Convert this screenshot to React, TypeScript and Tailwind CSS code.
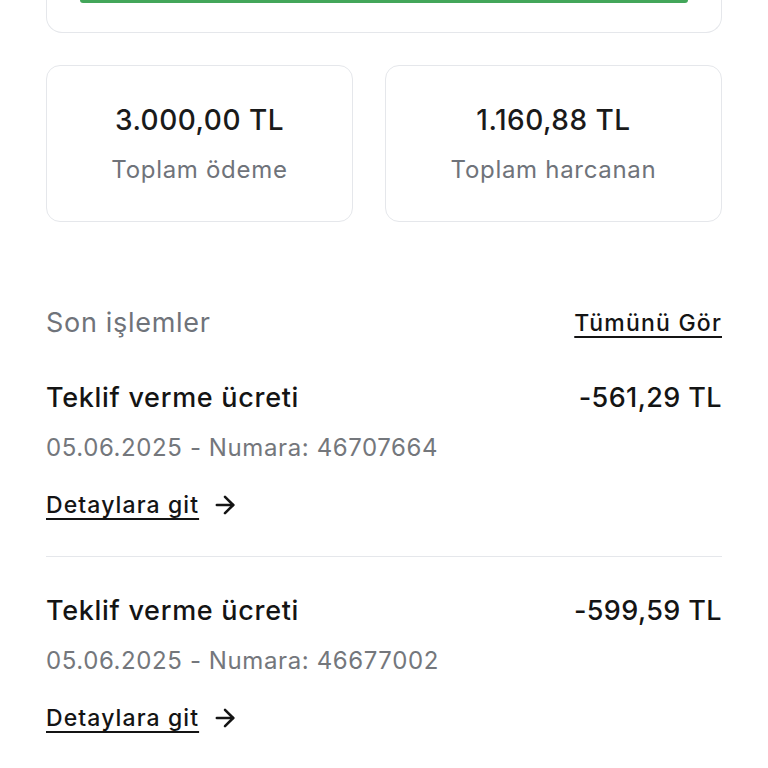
import { ArrowRight } from "lucide-react";

type Tx = { title: string; amount: string; date: string; no: string };

const items: Tx[] = [
  { title: "Teklif verme ücreti", amount: "-561,29 TL", date: "05.06.2025", no: "46707664" },
  { title: "Teklif verme ücreti", amount: "-599,59 TL", date: "05.06.2025", no: "46677002" },
];

function StatCard({ value, label, className }: { value: string; label: string; className: string }) {
  return (
    <div className={`flex h-[157px] flex-col items-center justify-center rounded-[14px] border border-gray-200 bg-white ${className}`}>
      <div className="text-[28px] font-medium leading-none tracking-[0.5px] text-[#1a1a1a]">{value}</div>
      <div className="mt-[24px] text-[24px] leading-none tracking-[0.7px] text-[#6f737a]">{label}</div>
    </div>
  );
}

export default function App() {
  return (
    <div className="h-[768px] w-[768px] overflow-hidden bg-white font-['Inter',sans-serif] text-[#141414]">
      <div className="px-[46px]">
        {/* üst kart (kesik) */}
        <div className="h-[33px] rounded-b-[16px] border border-t-0 border-gray-200 bg-white px-[33px]">
          <div className="h-[3px] rounded-b-full bg-[#43a65a]" />
        </div>

        {/* toplamlar */}
        <div className="mt-[32px] flex gap-[32px]">
          <StatCard value="3.000,00 TL" label="Toplam ödeme" className="w-[307px]" />
          <StatCard value="1.160,88 TL" label="Toplam harcanan" className="flex-1" />
        </div>

        {/* son işlemler */}
        <div className="mt-[81px] flex items-center justify-between">
          <span className="text-[27px] tracking-[0.7px] text-[#6f737a]">Son işlemler</span>
          <a className="text-[23px] font-medium tracking-[1.2px] underline underline-offset-[5px] decoration-[1.5px]">Tümünü Gör</a>
        </div>

        <div className="mt-[34px]">
          {items.map((t, i) => (
            <div key={t.no} className={i > 0 ? "border-t border-gray-200 pt-[34px]" : "pt-0"}>
              <div className="flex items-center justify-between">
                <span className="text-[27px] font-medium tracking-[0.7px]">{t.title}</span>
                <span className="text-[27px] font-medium tracking-[0.4px]">{t.amount}</span>
              </div>
              <div className="mt-[12px] text-[24px] tracking-[0.6px] text-[#74777c]">
                {t.date} - Numara: {t.no}
              </div>
              <div className="mt-[22px] flex items-center gap-[12px] pb-[33px]">
                <a className="text-[23px] font-medium tracking-[1.1px] underline underline-offset-[5px] decoration-[1.5px]">Detaylara git</a>
                <ArrowRight size={28} strokeWidth={2.2} />
              </div>
            </div>
          ))}
        </div>
      </div>
    </div>
  );
}
